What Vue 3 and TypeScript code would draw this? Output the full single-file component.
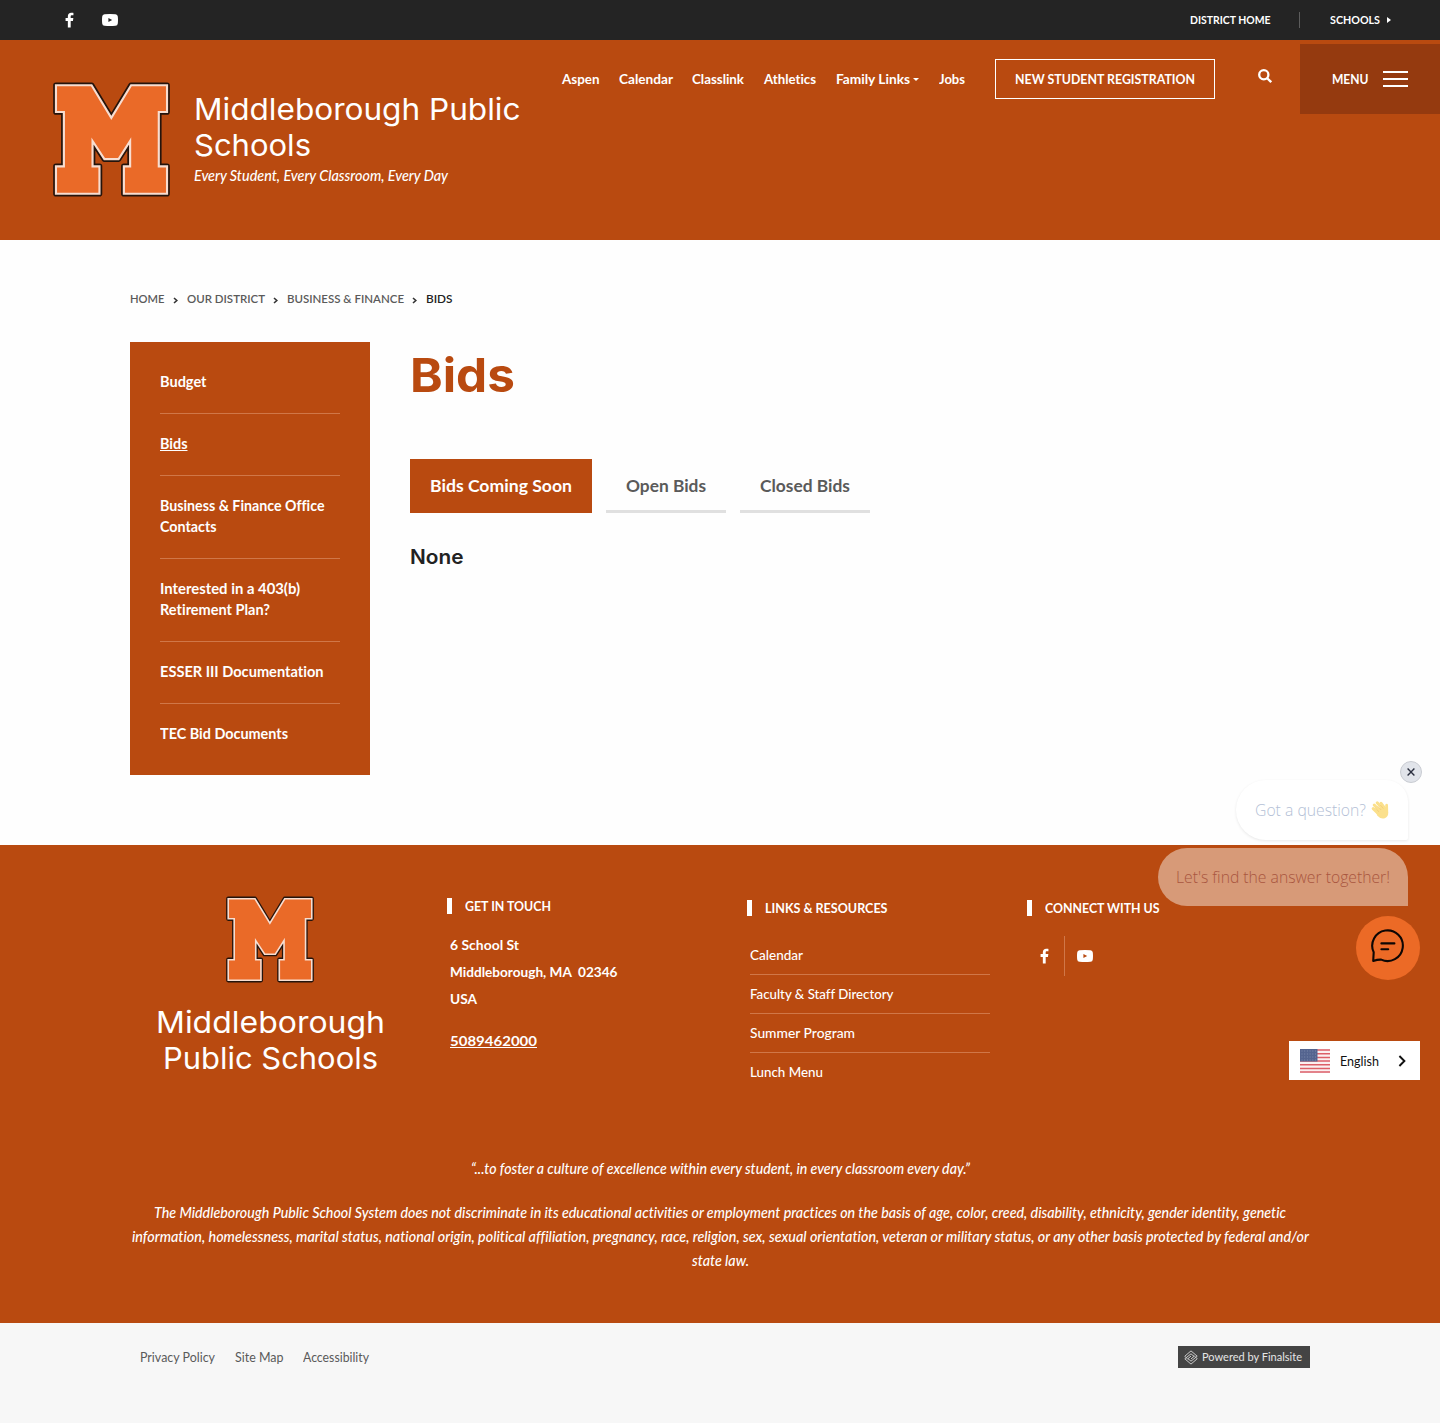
<script setup lang="ts">
import type { Directive } from 'vue'

interface TrackedLabel {
  label: string
  width: number
}

interface SideLink {
  lines: TrackedLabel[]
  current?: boolean
}

// Condenses or extends a label so that it fills the given width in pixels.
const vTrack: Directive<HTMLElement, number> = {
  mounted(el, { value }) {
    const natural = el.getBoundingClientRect().width
    el.style.transform = `scaleX(${value / natural})`
    el.style.marginRight = `${value - natural}px`
  },
}

const mark =
  'M46 44H154L214 143L274 44H383V125H358V290H383V373H252V290H271V213L236 268H193L157 213V290H178V373H46V290H70V125H46Z'
const facebook =
  'M3 16V9H0.6V6H3V4.2C3 1.5 4.4 0.3 6.6 0.3C7.7 0.3 8.6 0.4 8.9 0.5V3.1H7.4C6.3 3.1 6 3.6 6 4.5V6H8.8L8.4 9H6V16Z'
const youtube =
  'M2.5 0.3Q8 -0.2 13.5 0.3Q15.6 0.5 15.8 2.6Q16.2 6 15.8 9.4Q15.6 11.5 13.5 11.7Q8 12.2 2.5 11.7Q0.4 11.5 0.2 9.4Q-0.2 6 0.2 2.6Q0.4 0.5 2.5 0.3ZM6.4 3.9V8.1L10.2 6Z'

const navLinks: (TrackedLabel & { caret?: boolean })[] = [
  { label: 'Aspen', width: 37.5 },
  { label: 'Calendar', width: 54 },
  { label: 'Classlink', width: 52 },
  { label: 'Athletics', width: 52 },
  { label: 'Family Links', width: 74, caret: true },
  { label: 'Jobs', width: 26 },
]

const crumbs: TrackedLabel[] = [
  { label: 'HOME', width: 34.5 },
  { label: 'OUR DISTRICT', width: 78 },
  { label: 'BUSINESS & FINANCE', width: 117 },
  { label: 'BIDS', width: 26.5 },
]

const sideLinks: SideLink[] = [
  { lines: [{ label: 'Budget', width: 46.5 }] },
  { lines: [{ label: 'Bids', width: 27.5 }], current: true },
  { lines: [{ label: 'Business & Finance Office', width: 164.5 }, { label: 'Contacts', width: 56.5 }] },
  { lines: [{ label: 'Interested in a 403(b)', width: 140 }, { label: 'Retirement Plan?', width: 110 }] },
  { lines: [{ label: 'ESSER III Documentation', width: 163.5 }] },
  { lines: [{ label: 'TEC Bid Documents', width: 128 }] },
]

const tabs: TrackedLabel[] = [
  { label: 'Bids Coming Soon', width: 142 },
  { label: 'Open Bids', width: 80 },
  { label: 'Closed Bids', width: 90 },
]

const address: TrackedLabel[] = [
  { label: '6 School St', width: 69 },
  { label: 'Middleborough, MA\u00a0 02346', width: 167.5 },
  { label: 'USA', width: 27 },
]

const resources: TrackedLabel[] = [
  { label: 'Calendar', width: 53 },
  { label: 'Faculty & Staff Directory', width: 143.5 },
  { label: 'Summer Program', width: 105 },
  { label: 'Lunch Menu', width: 73 },
]

const statement: TrackedLabel[] = [
  {
    label:
      'The Middleborough Public School System does not discriminate in its educational activities or employment practices on the basis of age, color, creed, disability, ethnicity, gender identity, genetic',
    width: 1132,
  },
  {
    label:
      'information, homelessness, marital status, national origin, political affiliation, pregnancy, race, religion, sex, sexual orientation, veteran or military status, or any other basis protected by federal and/or',
    width: 1177,
  },
  { label: 'state law.', width: 57 },
]

const legal: TrackedLabel[] = [
  { label: 'Privacy Policy', width: 75 },
  { label: 'Site Map', width: 48.5 },
  { label: 'Accessibility', width: 66 },
]
</script>

<template>
  <div class="page">
    <div class="topbar">
      <div class="social">
        <svg class="fb" viewBox="0 0 9.5 16"><path :d="facebook" /></svg>
        <svg class="yt" viewBox="0 0 16 12"><path fill-rule="evenodd" :d="youtube" /></svg>
      </div>
      <div class="portals">
        <span v-track="80.5">DISTRICT HOME</span>
        <i class="rule"></i>
        <span v-track="50">SCHOOLS</span>
        <svg class="right-caret" viewBox="0 0 4 6"><path d="M0 0L4 3L0 6Z" /></svg>
      </div>
    </div>

    <header class="header">
      <div class="brand">
        <svg class="mark" viewBox="37 35 355 347">
          <path :d="mark" fill="none" stroke="#25140c" stroke-width="17" stroke-linejoin="round" />
          <path :d="mark" fill="#ea6a28" stroke="#f8ddd0" stroke-width="6.5" />
        </svg>
        <div class="brand-text">
          <div class="school"><span v-track="326.5">Middleborough Public</span></div>
          <div class="school"><span v-track="117">Schools</span></div>
          <div class="tagline"><span v-track="254">Every Student, Every Classroom, Every Day</span></div>
        </div>
      </div>
      <div class="actions">
        <nav class="nav">
          <a v-for="link in navLinks" :key="link.label">
            <span v-track="link.width">{{ link.label }}</span>
            <svg v-if="link.caret" class="caret" viewBox="0 0 6 3"><path d="M0 0H6L3 3Z" /></svg>
          </a>
        </nav>
        <a class="register"><span v-track="180">NEW STUDENT REGISTRATION</span></a>
        <svg class="search" viewBox="0 0 14 14">
          <circle cx="5.8" cy="5.8" r="4.6" />
          <path d="M9.2 9.2L13.2 13.2" />
        </svg>
        <a class="menu">
          <span v-track="36.5">MENU</span>
          <i class="bars"><b></b><b></b><b></b></i>
        </a>
      </div>
    </header>

    <main class="main">
      <nav class="crumbs">
        <template v-for="(crumb, i) in crumbs" :key="crumb.label">
          <svg v-if="i > 0" viewBox="0 0 5 7"><path d="M1 1L3.8 3.5L1 6" /></svg>
          <span v-track="crumb.width" :class="{ here: i === crumbs.length - 1 }">{{ crumb.label }}</span>
        </template>
      </nav>
      <div class="columns">
        <aside class="side">
          <a v-for="link in sideLinks" :key="link.lines[0].label" :class="{ current: link.current }">
            <span v-for="line in link.lines" :key="line.label" v-track="line.width">{{ line.label }}</span>
          </a>
        </aside>
        <section class="content">
          <h1><span v-track="105">Bids</span></h1>
          <div class="tabs">
            <a v-for="(tab, i) in tabs" :key="tab.label" :class="{ active: i === 0 }">
              <span v-track="tab.width">{{ tab.label }}</span>
            </a>
          </div>
          <h3><span v-track="53.5">None</span></h3>
        </section>
      </div>
    </main>

    <footer class="footer">
      <div class="footer-columns">
        <div class="footer-brand">
          <svg class="mark" viewBox="37 35 355 347">
            <path :d="mark" fill="none" stroke="#25140c" stroke-width="17" stroke-linejoin="round" />
            <path :d="mark" fill="#ea6a28" stroke="#f8ddd0" stroke-width="6.5" />
          </svg>
          <div class="school"><span v-track="229">Middleborough</span></div>
          <div class="school"><span v-track="215">Public Schools</span></div>
        </div>
        <div class="touch">
          <h2><i></i><span v-track="86">GET IN TOUCH</span></h2>
          <div v-for="line in address" :key="line.label" class="line">
            <span v-track="line.width">{{ line.label }}</span>
          </div>
          <a class="phone"><span v-track="87">5089462000</span></a>
        </div>
        <div class="resources">
          <h2><i></i><span v-track="122.5">LINKS &amp; RESOURCES</span></h2>
          <a v-for="link in resources" :key="link.label"><span v-track="link.width">{{ link.label }}</span></a>
        </div>
        <div class="connect">
          <h2><i></i><span v-track="114.5">CONNECT WITH US</span></h2>
          <div class="icons">
            <div><svg class="fb" viewBox="0 0 9.5 16"><path :d="facebook" /></svg></div>
            <div><svg class="yt" viewBox="0 0 16 12"><path fill-rule="evenodd" :d="youtube" /></svg></div>
          </div>
        </div>
      </div>
      <p class="motto"><span v-track="499">“...to foster a culture of excellence within every student, in every classroom every day.”</span></p>
      <p class="statement">
        <span v-for="line in statement" :key="line.label" v-track="line.width">{{ line.label }}</span>
      </p>
    </footer>

    <div class="bottom">
      <div class="legal">
        <a v-for="link in legal" :key="link.label"><span v-track="link.width">{{ link.label }}</span></a>
      </div>
      <div class="powered">
        <svg viewBox="0 0 14 15">
          <path d="M4.2 9.6L0.8 6.2L7 0.9L13.2 6.2L7 11.2L4 8.6L7 6.1" />
          <path d="M9.8 5.4L13.2 8.8L7 14.1L0.8 8.8L7 3.8L10 6.4L7 8.9" />
        </svg>
        <span v-track="100">Powered by Finalsite</span>
      </div>
    </div>

    <div class="chat">
      <div class="close">
        <svg viewBox="0 0 8 8"><path d="M0.6 0.6L7.4 7.4M7.4 0.6L0.6 7.4" /></svg>
      </div>
      <div class="bubble ask">
        <span v-track="111">Got a question?</span>
        <svg class="wave" viewBox="0 0 20 20">
          <g fill="none" stroke="#fbe08c" stroke-linecap="round">
            <path d="M3.2 8.6L9.5 14.6" stroke-width="3" />
            <path d="M4.2 5L11 12" stroke-width="3" />
            <path d="M7.2 2.8L13.2 9.6" stroke-width="3" />
            <path d="M11 3.2L15.4 9" stroke-width="2.8" />
            <path d="M16.6 5.2L16.8 12" stroke-width="2.8" />
          </g>
          <path d="M5.5 11L13.4 5.8Q17.6 9 18.2 12.4Q18.5 16.5 14.8 18.2Q10.5 19.4 7.4 15.8Z" fill="#fbe08c" />
          <path d="M5.2 8L9 11.8M7.6 6.2L11.2 10M10.4 5L13.4 8.6" stroke="#f2c873" stroke-width="0.7" fill="none" />
        </svg>
      </div>
      <div class="bubble answer"><span v-track="214">Let's find the answer together!</span></div>
      <div class="launcher">
        <svg viewBox="0 0 34 34">
          <path d="M2.2 32L2.7 23.2A15.3 15.3 0 1 1 10.2 30.6Q6.8 30.4 2.2 32Z" />
          <path d="M10.4 14.4H23.4M10.4 20.2H17.2" />
        </svg>
      </div>
    </div>

    <div class="language">
      <svg class="flag" viewBox="0 0 30 24">
        <rect width="30" height="24" fill="#fbeff0" />
        <path d="M0 1H30M0 4.7H30M0 8.4H30M0 12.1H30M0 15.8H30M0 19.5H30M0 23H30" stroke="#dc5f68" stroke-width="1.5" />
        <rect width="17.5" height="12.5" fill="#54648f" />
        <path d="M1.5 2H17M1.5 5H17M1.5 8H17M1.5 11H17" stroke="#8290b0" stroke-width="0.9" stroke-dasharray="1 1.7" />
      </svg>
      <span v-track="39">English</span>
      <svg class="chevron" viewBox="0 0 8 12"><path d="M1.4 1L6.4 6L1.4 11" /></svg>
    </div>
  </div>
</template>

<style>
body {
  margin: 0;
}
</style>

<style scoped>
.page {
  position: relative;
  width: 1440px;
  height: 1423px;
  overflow: hidden;
  background: #fefefe;
  color: #fff;
  font-family: Lato, 'Open Sans', sans-serif;
  font-variant-ligatures: none;
}
.page * {
  box-sizing: border-box;
}
span {
  display: inline-block;
  flex: none;
  transform-origin: left center;
  white-space: nowrap;
}
svg {
  display: block;
  flex: none;
}
h1,
h2,
h3,
p {
  margin: 0;
}
.fb {
  width: 9px;
  height: 16px;
  fill: #fff;
}
.yt {
  width: 16px;
  height: 12px;
  fill: #fff;
}
.topbar {
  display: flex;
  justify-content: space-between;
  height: 40px;
  padding: 0 49px 0 65px;
  background: #242424;
}
.social {
  display: flex;
  align-items: center;
  gap: 28px;
}
.portals {
  display: flex;
  align-items: center;
  font-size: 11px;
  font-weight: 700;
  line-height: 16px;
}
.rule {
  width: 1px;
  height: 16px;
  margin: 0 30px 0 28.5px;
  background: #5c5c5c;
}
.right-caret {
  width: 4px;
  height: 6px;
  margin-left: 7px;
  fill: #fff;
}
.header {
  display: flex;
  justify-content: space-between;
  align-items: flex-start;
  height: 200px;
  background: #b94a10;
}
.brand {
  display: flex;
  padding: 42px 0 0 53px;
}
.brand .mark {
  width: 117px;
  height: 115px;
}
.brand-text {
  padding: 9px 0 0 23.5px;
}
.school {
  height: 36px;
  font-family: Inter, sans-serif;
  font-size: 30px;
  line-height: 36px;
}
.tagline {
  font-size: 15px;
  font-style: italic;
  font-weight: 500;
  line-height: 24px;
}
.actions {
  display: flex;
  align-items: flex-start;
}
.nav {
  display: flex;
  gap: 19.7px;
  padding-top: 29px;
  font-size: 14px;
  font-weight: 700;
  line-height: 20px;
}
.nav a {
  display: flex;
  align-items: center;
}
.caret {
  width: 6px;
  height: 3px;
  margin-left: 3.5px;
  fill: #fff;
}
.register {
  display: flex;
  align-items: center;
  justify-content: center;
  width: 220px;
  height: 40px;
  margin: 19px 43px 0 30px;
  padding-bottom: 2px;
  border: 1px solid #fff;
  font-size: 14px;
  font-weight: 700;
}
.search {
  width: 14px;
  height: 14px;
  margin: 29px 28px 0 0;
  fill: none;
  stroke: #fff;
  stroke-width: 2.3;
}
.menu {
  display: flex;
  align-items: center;
  gap: 14.5px;
  width: 140px;
  height: 70px;
  margin-top: 4px;
  padding-left: 32px;
  background: #953a0f;
  font-size: 14px;
  font-weight: 700;
}
.menu span {
  padding-bottom: 2px;
}
.bars {
  display: flex;
  flex-direction: column;
  gap: 5px;
}
.bars b {
  width: 25px;
  height: 2px;
  background: #fff;
}
.main {
  height: 605px;
  padding: 48px 130px 0;
}
.crumbs {
  display: flex;
  align-items: center;
  height: 20px;
  color: #5a5a5a;
  font-size: 12px;
  font-weight: 600;
}
.crumbs svg {
  width: 5px;
  height: 7px;
  margin: 4px 8.5px 0;
  fill: none;
  stroke: #333;
  stroke-width: 1.6;
}
.here {
  color: #222;
}
.columns {
  display: flex;
  gap: 40px;
  padding-top: 34px;
}
.side {
  display: flex;
  flex-direction: column;
  width: 240px;
  height: 433px;
  padding: 10px 30px;
  background: #b94a10;
}
.side a {
  display: flex;
  flex-direction: column;
  align-items: flex-start;
  padding: 19px 0 21px;
  border-bottom: 1px solid #d07748;
  font-size: 15px;
  font-weight: 700;
  line-height: 21px;
}
.side a:last-child {
  border-bottom: 0;
}
.side .current span {
  text-decoration: underline;
}
.content h1 {
  height: 117px;
  color: #b94a10;
  font-family: Inter, sans-serif;
  font-size: 47px;
  font-weight: 700;
  line-height: 66px;
}
.tabs {
  display: flex;
  gap: 14px;
}
.tabs a {
  height: 54px;
  padding: 0 20px;
  border-bottom: 3px solid #e0e0e0;
  color: #5a5a5a;
  font-size: 17.5px;
  font-weight: 700;
  line-height: 54px;
}
.tabs .active {
  border-bottom: 0;
  background: #b94a10;
  color: #fff;
}
.content h3 {
  padding-top: 29px;
  color: #222;
  font-family: Inter, sans-serif;
  font-size: 20px;
  font-weight: 600;
  line-height: 30px;
}
.footer {
  height: 478px;
  padding: 0 130px;
  background: #b94a10;
}
.footer-columns {
  display: flex;
  height: 311px;
}
.footer-brand {
  display: flex;
  flex-direction: column;
  align-items: center;
  width: 280px;
  padding-top: 51px;
}
.footer-brand .mark {
  width: 88px;
  height: 87px;
  margin-bottom: 21px;
}
.footer h2 {
  display: flex;
  align-items: center;
  height: 20px;
  margin-left: -2.6px;
  font-size: 14px;
  font-weight: 700;
}
.footer h2 i {
  width: 5px;
  height: 16px;
  margin-right: 12.6px;
  background: #fff;
}
.footer h2 span {
  padding-bottom: 2px;
}
.touch {
  width: 300px;
  padding: 51px 0 0 40px;
}
.touch h2 {
  margin-bottom: 15px;
}
.line {
  height: 27px;
  font-size: 14px;
  font-weight: 700;
  line-height: 27px;
}
.phone {
  display: block;
  padding-top: 15px;
  font-size: 14px;
  font-weight: 700;
  line-height: 27px;
}
.phone span {
  text-decoration: underline;
}
.resources {
  width: 280px;
  padding: 53px 0 0 40px;
}
.resources h2 {
  margin-bottom: 18px;
}
.resources a {
  display: flex;
  align-items: center;
  height: 39px;
  padding-bottom: 2px;
  border-bottom: 1px solid #d07748;
  font-size: 14px;
  font-weight: 500;
}
.resources a:last-child {
  border-bottom: 0;
}
.connect {
  padding: 53px 0 0 40px;
}
.icons {
  display: flex;
  height: 40px;
  margin-top: 18px;
  margin-left: -6px;
}
.icons div {
  display: flex;
  align-items: center;
  justify-content: center;
  width: 40px;
}
.icons div:first-child {
  width: 41px;
  border-right: 1px solid #d07748;
}
.motto,
.statement {
  display: flex;
  flex-direction: column;
  align-items: center;
  font-size: 15px;
  font-style: italic;
  font-weight: 500;
  line-height: 24px;
}
.statement {
  padding-top: 20px;
}
.bottom {
  display: flex;
  justify-content: space-between;
  align-items: flex-start;
  height: 100px;
  padding: 23px 130px 0 140px;
  background: #f7f7f7;
}
.legal {
  display: flex;
  gap: 19.6px;
  color: #5a5a5a;
  font-size: 14px;
  line-height: 22px;
}
.powered {
  display: flex;
  align-items: center;
  gap: 4px;
  width: 132px;
  height: 22px;
  padding-left: 6px;
  background: #444;
  color: #e6e6e6;
  font-size: 12px;
}
.powered span {
  padding-bottom: 1px;
}
.powered svg {
  width: 14px;
  height: 15px;
  fill: none;
  stroke: #c9c9c9;
  stroke-width: 1;
}
.chat {
  position: absolute;
  top: 761px;
  right: 18px;
  display: flex;
  flex-direction: column;
  align-items: flex-end;
  font-family: 'Open Sans', sans-serif;
  font-size: 16px;
  font-weight: 300;
}
.close {
  display: flex;
  align-items: center;
  justify-content: center;
  width: 22px;
  height: 22px;
  border: 1px solid #c9ccd2;
  border-radius: 50%;
  background: #e1e4ea;
}
.close svg {
  width: 8px;
  height: 8px;
  fill: none;
  stroke: #2c3040;
  stroke-width: 1.4;
}
.bubble {
  display: flex;
  align-items: center;
  height: 58px;
  margin-right: 14px;
  border-radius: 29px 29px 0 29px;
}
.ask {
  gap: 4px;
  width: 172px;
  height: 60px;
  margin-top: -3px;
  padding-left: 19px;
  border-radius: 30px 22px 2px 30px;
  background: #fff;
  box-shadow: 0 1px 3px rgba(0, 0, 0, 0.09);
  color: #b4bfd6;
}
.wave {
  width: 20px;
  height: 20px;
}
.answer {
  width: 250px;
  margin-top: 8px;
  padding-left: 18px;
  background: #d79a78;
  color: #a9563f;
}
.launcher {
  display: flex;
  align-items: center;
  justify-content: center;
  width: 64px;
  height: 64px;
  margin: 10px 2px 0 0;
  border-radius: 50%;
  background: #ec6a26;
}
.launcher svg {
  width: 34px;
  height: 34px;
  margin-top: -4px;
  fill: none;
  stroke: #0d0604;
  stroke-linecap: round;
  stroke-linejoin: round;
  stroke-width: 2.1;
}
.language {
  position: absolute;
  top: 1041px;
  right: 20px;
  display: flex;
  align-items: center;
  width: 131px;
  height: 39px;
  padding-left: 11px;
  background: #fff;
  color: #111;
  font-size: 14px;
}
.flag {
  width: 30px;
  height: 24px;
  margin-right: 10px;
}
.chevron {
  width: 8px;
  height: 12px;
  margin-left: 19px;
  fill: none;
  stroke: #111;
  stroke-width: 1.9;
}
</style>
